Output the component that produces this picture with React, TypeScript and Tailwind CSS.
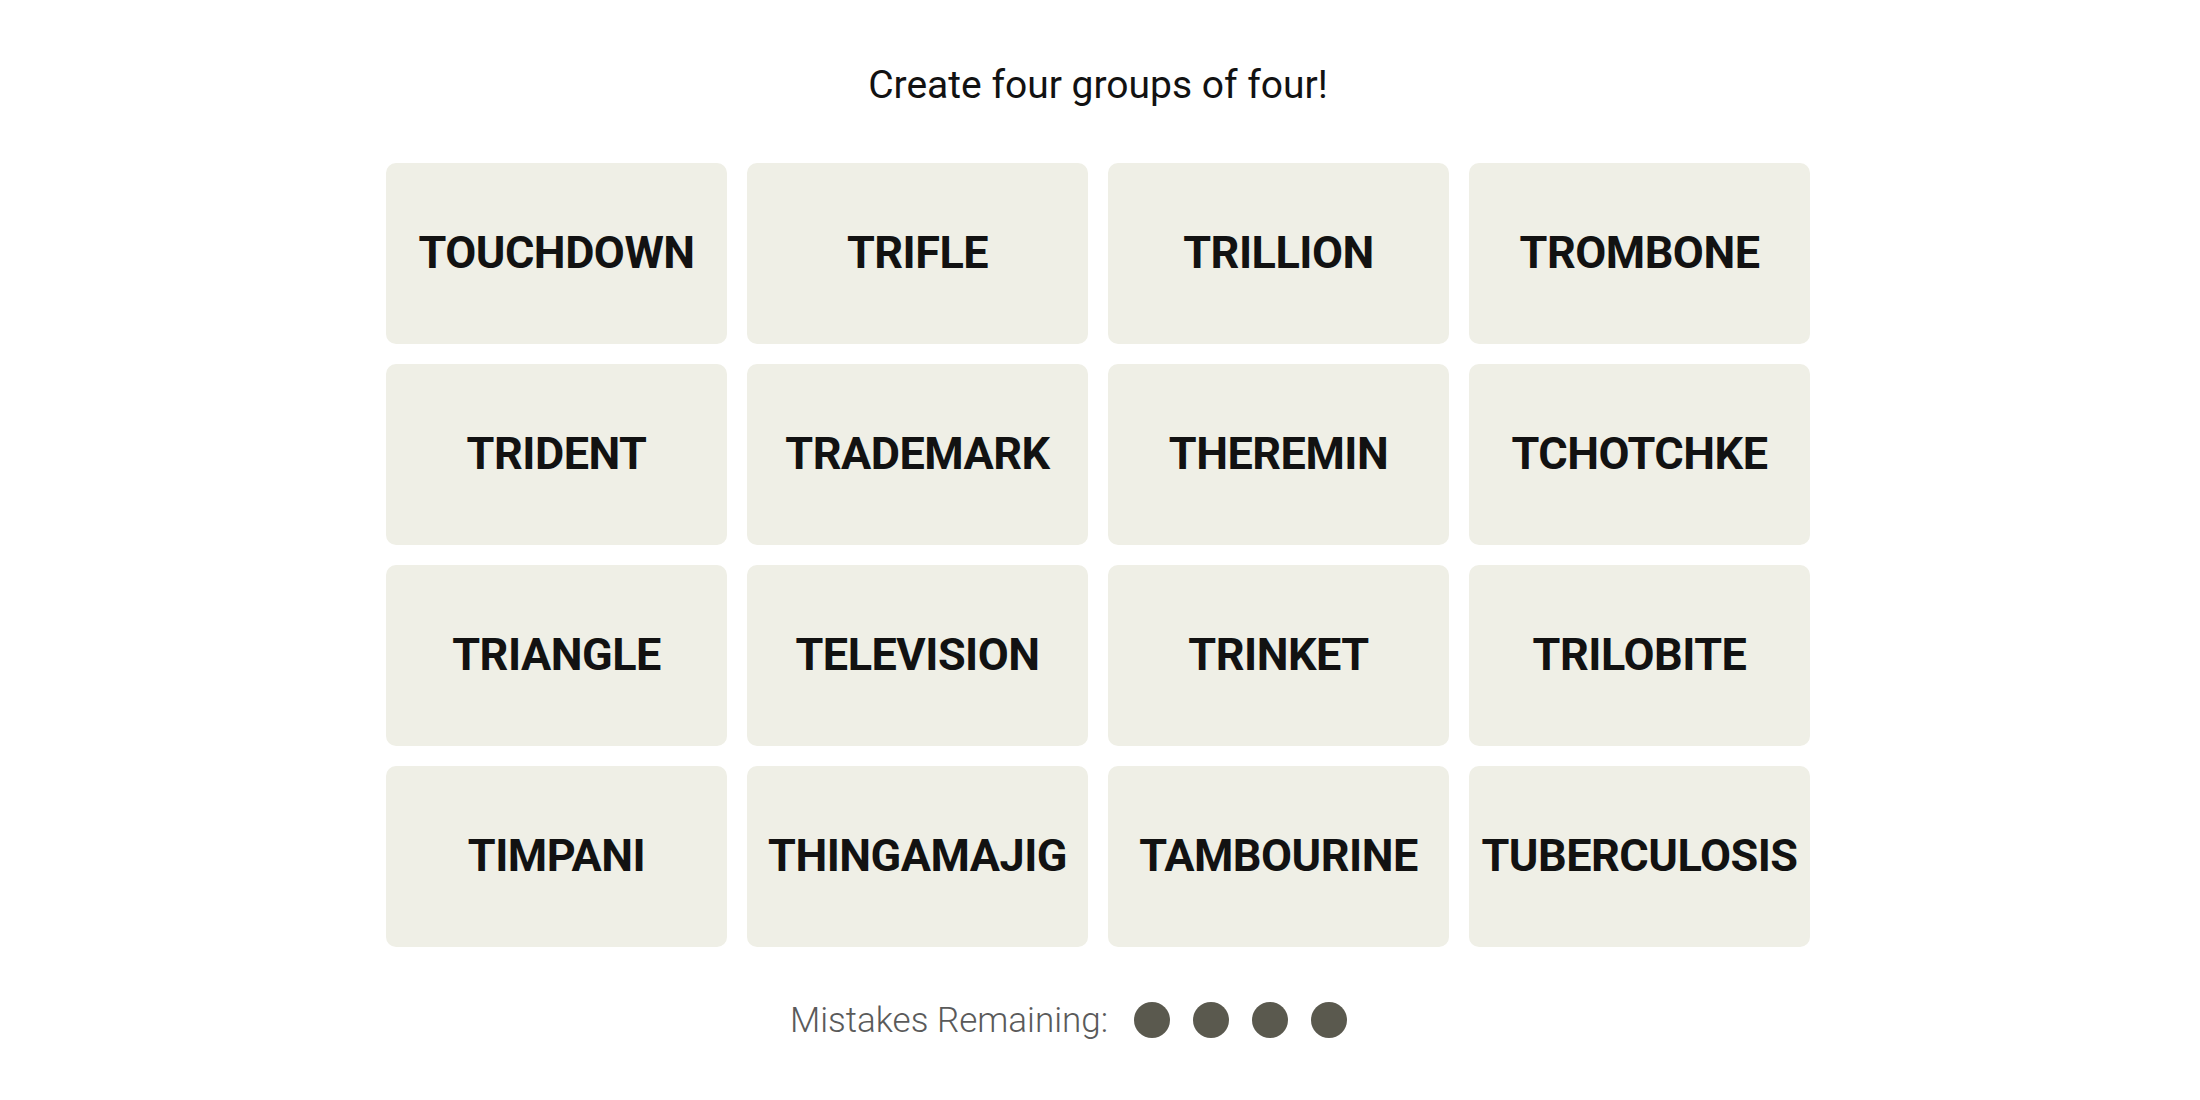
import React from "react";

const words = [
  "TOUCHDOWN", "TRIFLE", "TRILLION", "TROMBONE",
  "TRIDENT", "TRADEMARK", "THEREMIN", "TCHOTCHKE",
  "TRIANGLE", "TELEVISION", "TRINKET", "TRILOBITE",
  "TIMPANI", "THINGAMAJIG", "TAMBOURINE", "TUBERCULOSIS",
];

export default function App() {
  return (
    <div className="min-h-[1100px] w-full bg-white flex flex-col items-center" style={{ fontFamily: "Roboto, 'Liberation Sans', sans-serif" }}>
      <h1 className="mt-[66px] text-[39px] leading-none font-normal text-[#121212] pr-[4px]">Create four groups of four!</h1>
      <div className="mt-[58px] w-[1424px] grid grid-cols-4 gap-[20px] -translate-x-[2px]">
        {words.map((w) => (
          <div key={w} className="h-[181px] rounded-[10px] bg-[#efefe6] flex items-center justify-center">
            <span className="text-[45px] leading-none font-bold text-[#121212] whitespace-nowrap tracking-[-0.5px] -translate-y-[1px]">{w}</span>
          </div>
        ))}
      </div>
      <div className="mt-[55px] flex items-center pr-[63px]">
        <span className="text-[35px] leading-none font-light text-[#5a5a5a]">Mistakes Remaining:</span>
        <div className="ml-[26px] flex items-center gap-[23px]">
          <span className="w-[36px] h-[36px] rounded-full bg-[#5a594e]" />
          <span className="w-[36px] h-[36px] rounded-full bg-[#5a594e]" />
          <span className="w-[36px] h-[36px] rounded-full bg-[#5a594e]" />
          <span className="w-[36px] h-[36px] rounded-full bg-[#5a594e]" />
        </div>
      </div>
    </div>
  );
}
